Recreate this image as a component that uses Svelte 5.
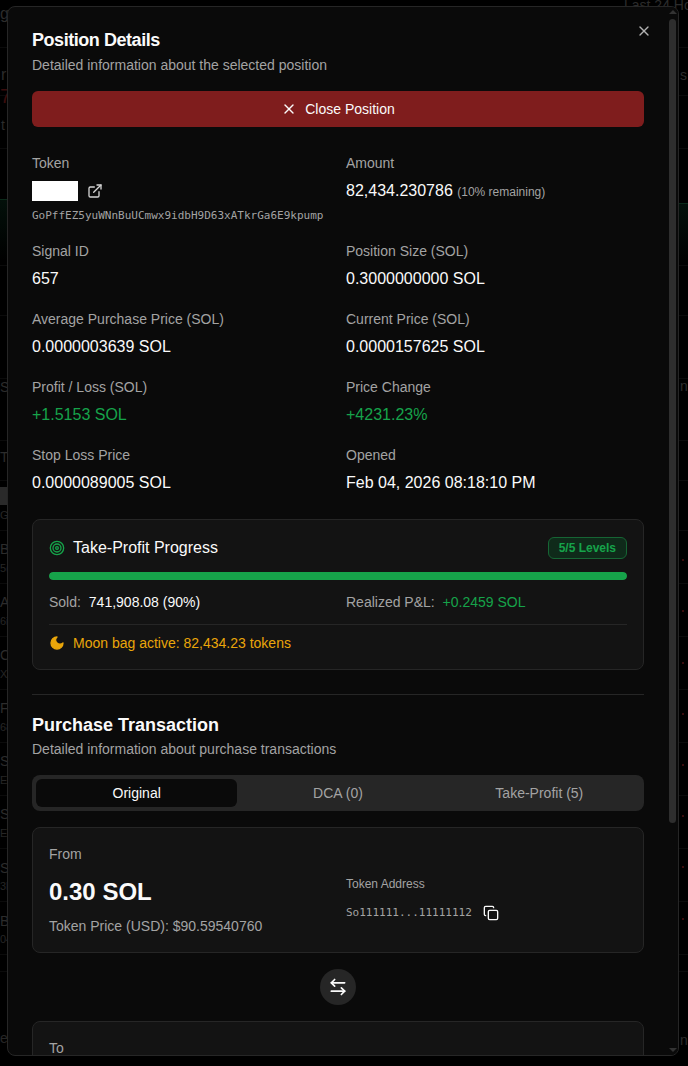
<script lang="ts">
  // stuff showing through the overlay at both sides of the modal
  const behind = [
    { t: "g", x: 0, y: 6, c: "#2c2c2c", s: 16 },
    { t: "r", x: 1, y: 67, c: "#2c2c2c", s: 16 },
    { t: "7", x: 0, y: 88, c: "#3a0d0d", s: 20 },
    { t: "t", x: 1, y: 117, c: "#2c2c2c", s: 14 },
    { t: "S", x: 0, y: 379, c: "#2c2c2c", s: 14 },
    { t: "To", x: 0, y: 449, c: "#2c2c2c", s: 14 },
    { t: "Go", x: 0, y: 507, c: "#262626", s: 11 },
    { t: "B", x: 0, y: 541, c: "#2c2c2c", s: 14 },
    { t: "5(", x: 0, y: 560, c: "#262626", s: 11 },
    { t: "A", x: 0, y: 594, c: "#2c2c2c", s: 14 },
    { t: "6i", x: 0, y: 613, c: "#262626", s: 11 },
    { t: "C", x: 0, y: 647, c: "#2c2c2c", s: 14 },
    { t: "Xl", x: 0, y: 666, c: "#262626", s: 11 },
    { t: "F", x: 0, y: 700, c: "#2c2c2c", s: 14 },
    { t: "68", x: 0, y: 719, c: "#262626", s: 11 },
    { t: "S", x: 0, y: 753, c: "#2c2c2c", s: 14 },
    { t: "Ea", x: 0, y: 772, c: "#262626", s: 11 },
    { t: "S", x: 0, y: 806, c: "#2c2c2c", s: 14 },
    { t: "El", x: 0, y: 825, c: "#262626", s: 11 },
    { t: "S", x: 0, y: 860, c: "#2c2c2c", s: 14 },
    { t: "3l", x: 0, y: 878, c: "#262626", s: 11 },
    { t: "B", x: 0, y: 913, c: "#2c2c2c", s: 14 },
    { t: "04", x: 0, y: 931, c: "#262626", s: 11 },
    { t: "e", x: 0, y: 1030, c: "#262626", s: 14 },
    { t: "Last 24 Ho", x: 624, y: -3, c: "#2c2c2c", s: 14 },
    { t: "s", x: 680, y: 67, c: "#2c2c2c", s: 14 },
    { t: "n", x: 680, y: 378, c: "#2c2c2c", s: 14 },
    { t: "n", x: 680, y: 1032, c: "#2c2c2c", s: 14 },
  ];
  const rules = [47, 95, 148, 265, 315, 378, 440, 480, 530, 583, 636, 689, 742, 795, 848, 901, 954, 971];
  const dots = [559, 610, 662, 713, 764, 815, 866, 918];

  const fields = [
    { label: "Signal ID", value: "657" },
    { label: "Position Size (SOL)", value: "0.3000000000 SOL" },
    { label: "Average Purchase Price (SOL)", value: "0.0000003639 SOL" },
    { label: "Current Price (SOL)", value: "0.0000157625 SOL" },
    { label: "Profit / Loss (SOL)", value: "+1.5153 SOL", up: true },
    { label: "Price Change", value: "+4231.23%", up: true },
    { label: "Stop Loss Price", value: "0.0000089005 SOL" },
    { label: "Opened", value: "Feb 04, 2026 08:18:10 PM" },
  ];

  const tabs = ["Original", "DCA (0)", "Take-Profit (5)"];
  let activeTab = $state(0);
</script>

<div class="page">
  <div class="behind">
    {#each rules as y}
      <div class="rule" style="top:{y}px"></div>
    {/each}
    <div class="glow" style="left:0;width:7px;top:199px"></div>
    <div class="glow" style="left:679px;width:9px;top:203px"></div>
    <div class="shade" style="top:487px"></div>
    {#each dots as y}
      <div class="dot" style="top:{y}px"></div>
    {/each}
    {#each behind as b}
      <span style="left:{b.x}px;top:{b.y}px;color:{b.c};font-size:{b.s}px">{b.t}</span>
    {/each}
  </div>

  <div class="modal">
    <div class="scroll">
      <h2>Position Details</h2>
      <p class="sub">Detailed information about the selected position</p>

      <button class="close-btn">
        <svg width="16" height="16" viewBox="0 0 24 24" class="ic"><path d="M18 6 6 18" /><path d="m6 6 12 12" /></svg>
        Close Position
      </button>

      <div class="grid first">
        <div class="field">
          <div class="label">Token</div>
          <div class="token-row">
            <span class="token-name"></span>
            <svg width="16" height="16" viewBox="0 0 24 24" class="ic muted-ic">
              <path d="M18 13v6a2 2 0 0 1-2 2H5a2 2 0 0 1-2-2V8a2 2 0 0 1 2-2h6" />
              <path d="m15 3 6 0 0 6" />
              <path d="M10 14 21 3" />
            </svg>
          </div>
          <div class="mono mint">GoPffEZ5yuWNnBuUCmwx9idbH9D63xATkrGa6E9kpump</div>
        </div>
        <div class="field">
          <div class="label">Amount</div>
          <div class="value">82,434.230786 <small>(10% remaining)</small></div>
        </div>
      </div>

      <div class="grid rows">
        {#each fields as f}
          <div class="field">
            <div class="label">{f.label}</div>
            <div class="value" class:up={f.up}>{f.value}</div>
          </div>
        {/each}
      </div>

      <section class="card tp">
        <div class="tp-head">
          <svg width="16" height="16" viewBox="0 0 24 24" class="ic green-ic">
            <circle cx="12" cy="12" r="10" /><circle cx="12" cy="12" r="6" /><circle cx="12" cy="12" r="2" />
          </svg>
          <span class="tp-title">Take-Profit Progress</span>
          <span class="badge">5/5 Levels</span>
        </div>
        <div class="bar"><div class="bar-fill" style="width:100%"></div></div>
        <div class="tp-stats">
          <div><span class="dim">Sold:</span> <span class="strong">741,908.08 (90%)</span></div>
          <div><span class="dim">Realized P&amp;L:</span> <span class="gain">+0.2459 SOL</span></div>
        </div>
        <div class="moon">
          <svg width="16" height="16" viewBox="0 0 24 24" class="moon-ic">
            <path d="M12 3a6 6 0 0 0 9 9 9 9 0 1 1-9-9Z" />
          </svg>
          Moon bag active: 82,434.23 tokens
        </div>
      </section>

      <hr />

      <h2 class="h-purchase">Purchase Transaction</h2>
      <p class="sub sub-purchase">Detailed information about purchase transactions</p>

      <div class="tabs">
        {#each tabs as tab, i}
          <button class="tab" class:active={activeTab === i} onclick={() => (activeTab = i)}>{tab}</button>
        {/each}
      </div>

      <section class="card from">
        <div class="from-left">
          <div class="label">From</div>
          <div class="big">0.30 SOL</div>
          <div class="price">Token Price (USD): $90.59540760</div>
        </div>
        <div class="from-right">
          <div class="addr-label">Token Address</div>
          <div class="addr">
            <span class="mono">So111111...11111112</span>
            <svg width="16" height="16" viewBox="0 0 24 24" class="ic">
              <rect x="8" y="8" width="14" height="14" rx="2" ry="2" />
              <path d="M4 16c-1.1 0-2-.9-2-2V4c0-1.1.9-2 2-2h10c1.1 0 2 .9 2 2" />
            </svg>
          </div>
        </div>
      </section>

      <div class="swap">
        <span class="swap-circle">
          <svg width="20" height="20" viewBox="0 0 24 24" class="ic">
            <path d="M8 3 4 7l4 4" /><path d="M4 7h16" /><path d="m16 21 4-4-4-4" /><path d="M20 17H4" />
          </svg>
        </span>
      </div>

      <section class="card to">
        <div class="label">To</div>
      </section>
    </div>

    <button class="x" aria-label="Close">
      <svg width="16" height="16" viewBox="0 0 24 24" class="ic"><path d="M18 6 6 18" /><path d="m6 6 12 12" /></svg>
    </button>

    <div class="track">
      <i class="arrow top"></i>
      <div class="thumb"></div>
      <i class="arrow bottom"></i>
    </div>
  </div>
</div>

<style>
  :global(body) {
    background: #000;
  }

  .page {
    position: relative;
    height: 1066px;
    overflow: hidden;
    background: #000;
    font-family: "Liberation Sans", Arial, sans-serif;
    color: #fafafa;
  }

  .behind {
    position: absolute;
    inset: 0;
  }
  .behind span {
    position: absolute;
    line-height: 16px;
    white-space: nowrap;
  }
  .rule {
    position: absolute;
    left: 0;
    right: 0;
    height: 1px;
    background: #0b0b0b;
  }
  .glow {
    position: absolute;
    height: 60px;
    border-top: 1px solid #0b2a1a;
    background: linear-gradient(#03100a, #000);
  }
  .shade {
    position: absolute;
    left: 0;
    width: 7px;
    height: 18px;
    background: #2a2a2a;
  }
  .dot {
    position: absolute;
    left: 682px;
    width: 2px;
    height: 2px;
    background: #3a0d0d;
  }

  .modal {
    position: absolute;
    left: 7px;
    top: 6px;
    width: 672px;
    height: 1050px;
    box-sizing: border-box;
    background: #0a0a0a;
    border: 1px solid #262626;
    border-radius: 8px;
    overflow: hidden;
  }

  .scroll {
    height: 100%;
    box-sizing: border-box;
    padding: 24px 34px 24px 24px;
    overflow: hidden;
  }

  h2 {
    margin: 0;
    font-size: 18px;
    line-height: 18px;
    font-weight: 700;
    letter-spacing: -0.45px;
  }
  .sub {
    margin: 6px 0 0;
    font-size: 14px;
    line-height: 20px;
    color: #a3a3a3;
  }
  .sub-purchase {
    margin-top: 5px;
  }

  .ic {
    fill: none;
    stroke: currentColor;
    stroke-width: 2;
    stroke-linecap: round;
    stroke-linejoin: round;
    flex: none;
  }

  button {
    font-family: inherit;
    border: 0;
    cursor: pointer;
  }

  .close-btn {
    display: flex;
    align-items: center;
    justify-content: center;
    gap: 8px;
    width: 100%;
    height: 36px;
    margin-top: 16px;
    background: #7f1d1d;
    color: #fafafa;
    border-radius: 6px;
    font-size: 14px;
    font-weight: 500;
  }

  .grid {
    display: grid;
    grid-template-columns: 1fr 1fr;
    column-gap: 16px;
  }
  .first {
    margin-top: 26px;
  }
  .rows {
    margin-top: 17px;
    row-gap: 18px;
  }
  .label {
    font-size: 14px;
    line-height: 20px;
    color: #a3a3a3;
  }
  .value {
    margin-top: 6px;
    font-size: 16px;
    line-height: 24px;
  }
  .value.up {
    color: #16a34a;
  }
  .value small {
    font-size: 12px;
    color: #a3a3a3;
  }

  .token-row {
    display: flex;
    align-items: center;
    gap: 9px;
    margin-top: 8px;
    height: 20px;
  }
  .token-name {
    width: 46px;
    height: 20px;
    background: #fff;
  }
  .muted-ic {
    color: #d4d4d4;
  }
  .mono {
    font-family: "DejaVu Sans Mono", "Liberation Mono", monospace;
    font-size: 11px;
    line-height: 16px;
    color: #a3a3a3;
  }
  .mint {
    margin-top: 7px;
  }

  .card {
    background: #131313;
    border: 1px solid #262626;
    border-radius: 8px;
    box-sizing: border-box;
  }

  .tp {
    margin-top: 24px;
    height: 151px;
    padding: 17px 16px 16px;
  }
  .tp-head {
    display: flex;
    align-items: center;
    gap: 8px;
    height: 22px;
  }
  .green-ic {
    color: #16a34a;
  }
  .tp-title {
    font-size: 16px;
    flex: 1;
  }
  .badge {
    box-sizing: border-box;
    height: 22px;
    padding: 0 10px;
    border: 1px solid #166534;
    border-radius: 6px;
    background: #0f2a1a;
    color: #16a34a;
    font-size: 12px;
    font-weight: 700;
    line-height: 20px;
  }
  .bar {
    height: 8px;
    margin-top: 13px;
    border-radius: 4px;
    background: #262626;
    overflow: hidden;
  }
  .bar-fill {
    height: 100%;
    background: #16a34a;
    border-radius: 4px;
  }
  .tp-stats {
    display: grid;
    grid-template-columns: 297px 1fr;
    margin-top: 12px;
    font-size: 14px;
    line-height: 20px;
  }
  .dim {
    color: #a3a3a3;
    margin-right: 4px;
  }
  .strong {
    font-size: 14px;
  }
  .gain {
    color: #16a34a;
  }
  .moon {
    display: flex;
    align-items: center;
    gap: 8px;
    margin-top: 12px;
    padding-top: 8px;
    border-top: 1px solid #262626;
    font-size: 14px;
    line-height: 20px;
    color: #eaa60a;
  }
  .moon-ic {
    fill: #eaa60a;
    stroke: #eaa60a;
    stroke-width: 2;
    stroke-linejoin: round;
    flex: none;
  }

  hr {
    border: 0;
    height: 1px;
    background: #262626;
    margin: 24px 0 0;
  }
  .h-purchase {
    margin-top: 21px;
    letter-spacing: 0;
  }

  .tabs {
    display: grid;
    grid-template-columns: repeat(3, 1fr);
    height: 36px;
    margin-top: 16px;
    padding: 4px;
    box-sizing: border-box;
    background: #262626;
    border-radius: 8px;
  }
  .tab {
    background: transparent;
    color: #a3a3a3;
    font-size: 14px;
    font-weight: 500;
    border-radius: 6px;
    padding: 0;
  }
  .tab.active {
    background: #0a0a0a;
    color: #fafafa;
  }

  .from {
    margin-top: 16px;
    height: 126px;
    padding: 16px;
    display: grid;
    grid-template-columns: 297px 1fr;
  }
  .big {
    margin-top: 12px;
    font-size: 24px;
    line-height: 32px;
    font-weight: 700;
  }
  .price {
    margin-top: 8px;
    font-size: 14px;
    line-height: 20px;
    color: #a3a3a3;
  }
  .from-right {
    padding-top: 32px;
  }
  .addr-label {
    font-size: 12px;
    line-height: 16px;
    color: #a3a3a3;
  }
  .addr {
    display: flex;
    align-items: center;
    gap: 11px;
    margin-top: 13px;
  }

  .swap {
    display: flex;
    justify-content: center;
    margin-top: 16px;
  }
  .swap-circle {
    display: flex;
    align-items: center;
    justify-content: center;
    width: 36px;
    height: 36px;
    border-radius: 50%;
    background: #262626;
  }

  .to {
    margin-top: 16px;
    height: 120px;
    padding: 16px;
  }

  .x {
    position: absolute;
    top: 16px;
    right: 26px;
    padding: 0;
    width: 16px;
    height: 16px;
    background: none;
    color: #fafafa;
    opacity: 0.7;
  }

  .track {
    position: absolute;
    top: 0;
    right: 0;
    bottom: 0;
    width: 10px;
    background: #0a0a0a;
  }
  .thumb {
    position: absolute;
    top: 12px;
    left: 1px;
    width: 7px;
    height: 804px;
    background: #2e2e2e;
    border-radius: 4px;
  }
  .arrow {
    position: absolute;
    left: 1px;
    width: 0;
    height: 0;
    border-left: 4px solid transparent;
    border-right: 4px solid transparent;
  }
  .arrow.top {
    top: 3px;
    border-bottom: 4px solid #333;
  }
  .arrow.bottom {
    bottom: 3px;
    border-top: 4px solid #333;
  }
</style>
